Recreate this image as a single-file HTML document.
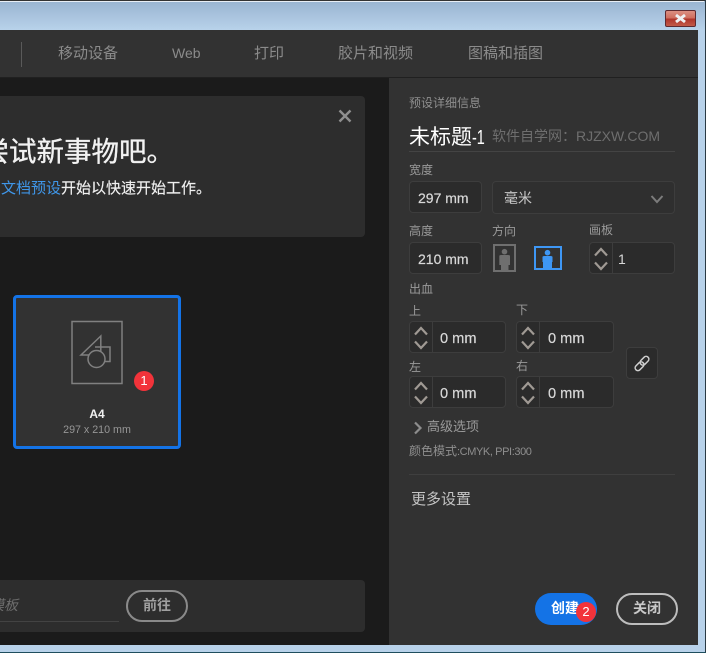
<!DOCTYPE html>
<html><head><meta charset="utf-8">
<style>
html,body{margin:0;padding:0;width:706px;height:653px;overflow:hidden;background:#b8d2ea}
body{position:relative;font-family:"Liberation Sans","Noto Sans CJK SC",sans-serif;}
.a{position:absolute;white-space:nowrap;line-height:1}
.box{position:absolute;box-sizing:border-box;background:#2b2b2b;border:1px solid #3d3d3d;border-radius:4px}
.lbl{position:absolute;white-space:nowrap;line-height:1;font-size:12px;color:#9a9a9a}
.val{position:absolute;white-space:nowrap;line-height:1;font-size:14px;color:#d8d8d8}
.v0{font-size:14.6px;-webkit-text-stroke:.2px #d8d8d8}
.tab{position:absolute;top:46px;white-space:nowrap;line-height:1;font-size:15px;color:#8b8b8b}
svg{position:absolute;overflow:visible}
</style></head><body>
<div style="position:absolute;left:0;top:0;width:706px;height:30px;background:linear-gradient(#98b3d0,#b8d2ea)"></div>
<div style="position:absolute;left:0;top:0;width:706px;height:1px;background:#333"></div>
<div style="position:absolute;left:0;top:1px;width:704px;height:1px;background:#e8eef5"></div>
<div style="position:absolute;left:705px;top:0;width:1px;height:653px;background:#2a3a44"></div>
<div style="position:absolute;left:0;top:652px;width:706px;height:1px;background:#1f4e5e"></div>

<div style="position:absolute;left:665px;top:10px;width:31px;height:17px;box-sizing:border-box;border:1px solid #5e2a30;border-radius:2px;background:linear-gradient(#dc8f82 0,#cf6f60 45%,#b0362c 55%,#c25a48 100%)"></div>
<svg style="left:665px;top:10px" width="31" height="17"><path d="M11 5 L20 12 M20 5 L11 12" stroke="#eef0f2" stroke-width="3" fill="none"/></svg>

<div style="position:absolute;left:0;top:30px;width:698px;height:615px;background:#1b1b1b"></div>
<div style="position:absolute;left:0;top:30px;width:698px;height:47px;background:#323232"></div>
<div style="position:absolute;left:0;top:77px;width:698px;height:1px;background:#202020"></div>
<div style="position:absolute;left:389px;top:78px;width:309px;height:567px;background:#323232"></div>

<div style="position:absolute;left:21px;top:42px;width:1px;height:25px;background:#5a5a5a"></div>
<div class="tab" style="left:58px">移动设备</div>
<div class="tab" style="left:172px;font-size:14px">Web</div>
<div class="tab" style="left:254px">打印</div>
<div class="tab" style="left:338px">胶片和视频</div>
<div class="tab" style="left:468px">图稿和插图</div>

<div style="position:absolute;left:-6px;top:96px;width:371px;height:141px;background:#2d2d2d;border-radius:4px"></div>
<svg style="left:338px;top:109px" width="14" height="14"><path d="M1.5 1.5 L12.5 12.5 M12.5 1.5 L1.5 12.5" stroke="#8f8f8f" stroke-width="2.4" fill="none"/></svg>
<div class="a" style="left:-18.500px;top:138px;font-size:27.500px;color:#f2f2f2;-webkit-text-stroke:.35px #f2f2f2">尝试新事物吧。</div>
<div class="a" style="left:1px;top:181px;font-size:15px;color:#f0f0f0;-webkit-text-stroke:.15px #f0f0f0"><span style="color:#3f97ea;-webkit-text-stroke:0">文档预设</span>开始以快速开始工作。</div>

<div style="position:absolute;left:13px;top:295px;width:168px;height:154px;box-sizing:border-box;background:#323232;border:3px solid #1473e6;border-radius:4px"></div>
<svg style="left:0;top:0" width="200" height="400">
<rect x="72" y="321.500" width="50" height="62" fill="none" stroke="#808080" stroke-width="1.500"/>
<path d="M100.800 336 L81 355 L100.800 355 Z" fill="none" stroke="#808080" stroke-width="1.500"/>
<path d="M95 347 H110 V361.500 H104" fill="none" stroke="#808080" stroke-width="1.500"/>
<circle cx="96.500" cy="359" r="8.500" fill="#323232" stroke="#808080" stroke-width="1.500"/>
</svg>
<div style="position:absolute;left:134px;top:371px;width:20px;height:20px;border-radius:50%;background:#f2333a"></div>
<div class="a" style="left:134px;top:374px;width:20px;text-align:center;font-size:13px;color:#fff">1</div>
<div class="a" style="left:0;top:408px;width:194px;text-align:center;font-size:12px;font-weight:bold;color:#f0f0f0">A4</div>
<div class="a" style="left:0;top:425px;width:194px;text-align:center;font-size:10.700px;color:#969696">297 x 210 mm</div>

<div style="position:absolute;left:-6px;top:580px;width:371px;height:52px;background:#2d2d2d;border-radius:4px"></div>
<div class="a" style="left:-10px;top:598px;font-size:14px;font-style:italic;color:#6e6e6e">模板</div>
<div style="position:absolute;left:0;top:621px;width:119px;height:1px;background:#434343"></div>
<div style="position:absolute;left:126px;top:590px;width:62px;height:32px;box-sizing:border-box;border:2px solid #8a8a8a;border-radius:16px"></div>
<div class="a" style="left:126px;top:598px;width:62px;text-align:center;font-size:14px;font-weight:bold;color:#a0a0a0">前往</div>

<div class="lbl" style="left:409px;top:97px;color:#8f8f8f">预设详细信息</div>
<div class="a" style="left:409px;top:127px;font-size:21px;color:#fff">未标题<span style="display:inline-block;font-size:20px;transform:scaleX(.72);transform-origin:0 50%;width:13px">-1</span></div>
<div class="a" style="left:492px;top:129px;font-size:14px;color:#6e6e6e">软件自学网：RJZXW.COM</div>
<div style="position:absolute;left:409px;top:151px;width:266px;height:1px;background:#444"></div>

<div class="lbl" style="left:409px;top:164px">宽度</div>
<div class="box" style="left:409px;top:181px;width:73px;height:32px"></div>
<div class="val" style="left:418px;top:191px;-webkit-text-stroke:.2px #d8d8d8">297 mm</div>
<div class="box" style="left:492px;top:181px;width:183px;height:33px;background:#2f2f2f"></div>
<div class="val" style="left:504px;top:191px;color:#c8c8c8">毫米</div>
<svg style="left:650px;top:194px" width="16" height="10"><path d="M1.500 2 L7 8 L12.500 2" fill="none" stroke="#7c7c7c" stroke-width="2"/></svg>

<div class="lbl" style="left:409px;top:225px">高度</div>
<div class="lbl" style="left:492px;top:225px">方向</div>
<div class="lbl" style="left:589px;top:224px">画板</div>
<div class="box" style="left:409px;top:242px;width:73px;height:32px"></div>
<div class="val" style="left:418px;top:252px;-webkit-text-stroke:.2px #d8d8d8">210 mm</div>
<svg style="left:493px;top:244px" width="24" height="28">
<rect x="1" y="1" width="21" height="26" fill="none" stroke="#6f6f6f" stroke-width="2"/>
<circle cx="11.500" cy="7.700" r="2.800" fill="#6f6f6f"/>
<path d="M6.300 12 Q6.300 11 8.300 11 H15 Q17 11 17 12 V21 H15.500 V27 H8 V21 H6.300 Z" fill="#6f6f6f"/>
</svg>
<svg style="left:534px;top:246px" width="28" height="24">
<rect x="1" y="1" width="26" height="22" fill="none" stroke="#3e97f5" stroke-width="2"/>
<circle cx="13.500" cy="6.700" r="2.800" fill="#3e97f5"/>
<path d="M8.500 11 Q8.500 10 10.500 10 H16.500 Q18.500 10 18.500 11 V16 H18 V23 H9 V16 H8.500 Z" fill="#3e97f5"/>
</svg>
<div class="box" style="left:589px;top:242px;width:86px;height:32px"></div>
<div style="position:absolute;left:612px;top:243px;width:1px;height:30px;background:#3d3d3d"></div>
<svg style="left:592px;top:247px" width="18" height="24"><path d="M3 8.500 L9 2 L15 8.500 M3 15.500 L9 22 L15 15.500" fill="none" stroke="#a09a94" stroke-width="2.200"/></svg>
<div class="val" style="left:618px;top:252px">1</div>

<div class="lbl" style="left:409px;top:283px">出血</div>
<div class="lbl" style="left:409px;top:305px">上</div>
<div class="lbl" style="left:516px;top:304px">下</div>
<div class="lbl" style="left:409px;top:361px">左</div>
<div class="lbl" style="left:516px;top:360px">右</div>

<div class="box" style="left:409px;top:321px;width:97px;height:32px"></div>
<div style="position:absolute;left:432px;top:322px;width:1px;height:30px;background:#3d3d3d"></div>
<svg style="left:412px;top:326px" width="18" height="24"><path d="M3 8.500 L9 2 L15 8.500 M3 15.500 L9 22 L15 15.500" fill="none" stroke="#a09a94" stroke-width="2.200"/></svg>
<div class="val v0" style="left:440px;top:332px">0 mm</div>

<div class="box" style="left:516px;top:321px;width:98px;height:32px"></div>
<div style="position:absolute;left:539px;top:322px;width:1px;height:30px;background:#3d3d3d"></div>
<svg style="left:519px;top:326px" width="18" height="24"><path d="M3 8.500 L9 2 L15 8.500 M3 15.500 L9 22 L15 15.500" fill="none" stroke="#a09a94" stroke-width="2.200"/></svg>
<div class="val v0" style="left:548px;top:332px">0 mm</div>

<div class="box" style="left:409px;top:376px;width:97px;height:32px"></div>
<div style="position:absolute;left:432px;top:377px;width:1px;height:30px;background:#3d3d3d"></div>
<svg style="left:412px;top:381px" width="18" height="24"><path d="M3 8.500 L9 2 L15 8.500 M3 15.500 L9 22 L15 15.500" fill="none" stroke="#a09a94" stroke-width="2.200"/></svg>
<div class="val v0" style="left:440px;top:387px">0 mm</div>

<div class="box" style="left:516px;top:376px;width:98px;height:32px"></div>
<div style="position:absolute;left:539px;top:377px;width:1px;height:30px;background:#3d3d3d"></div>
<svg style="left:519px;top:381px" width="18" height="24"><path d="M3 8.500 L9 2 L15 8.500 M3 15.500 L9 22 L15 15.500" fill="none" stroke="#a09a94" stroke-width="2.200"/></svg>
<div class="val v0" style="left:548px;top:387px">0 mm</div>

<div class="box" style="left:626px;top:347px;width:32px;height:32px;background:#2b2b2b"></div>
<svg style="left:635px;top:356px" width="15" height="15">
<rect x="-0.500" y="7.500" width="10" height="5.500" rx="2.750" transform="rotate(-45 4.500 10.250)" fill="none" stroke="#cfcfcf" stroke-width="1.500"/>
<rect x="4.500" y="2" width="10" height="5.500" rx="2.750" transform="rotate(-45 9.500 4.750)" fill="none" stroke="#cfcfcf" stroke-width="1.500"/>
</svg>

<svg style="left:413px;top:421px" width="10" height="14"><path d="M2 1.500 L7.500 7 L2 12.500" fill="none" stroke="#8d8d8d" stroke-width="2.200"/></svg>
<div class="a" style="left:427px;top:420px;font-size:13px;color:#9a9a9a">高级选项</div>
<div class="a" style="left:409px;top:445px;font-size:12px;color:#8f8f8f">颜色模式<span style="font-size:11px;letter-spacing:-.4px">:CMYK, PPI:300</span></div>
<div style="position:absolute;left:409px;top:474px;width:266px;height:1px;background:#3f3f3f"></div>
<div class="a" style="left:411px;top:492px;font-size:15px;color:#c4c4c4">更多设置</div>

<div style="position:absolute;left:535px;top:593px;width:62px;height:32px;border-radius:16px;background:#1473e6"></div>
<div class="a" style="left:551px;top:601px;font-size:14px;font-weight:bold;color:#fff">创建</div>
<div style="position:absolute;left:576px;top:602px;width:20px;height:20px;border-radius:50%;background:#f2333a"></div>
<div class="a" style="left:576px;top:605px;width:20px;text-align:center;font-size:13px;color:#fff">2</div>
<div style="position:absolute;left:616px;top:593px;width:62px;height:32px;box-sizing:border-box;border:2px solid #bdbdbd;border-radius:16px"></div>
<div class="a" style="left:616px;top:601px;width:62px;text-align:center;font-size:14px;font-weight:bold;color:#c8c8c8">关闭</div>
</body></html>
